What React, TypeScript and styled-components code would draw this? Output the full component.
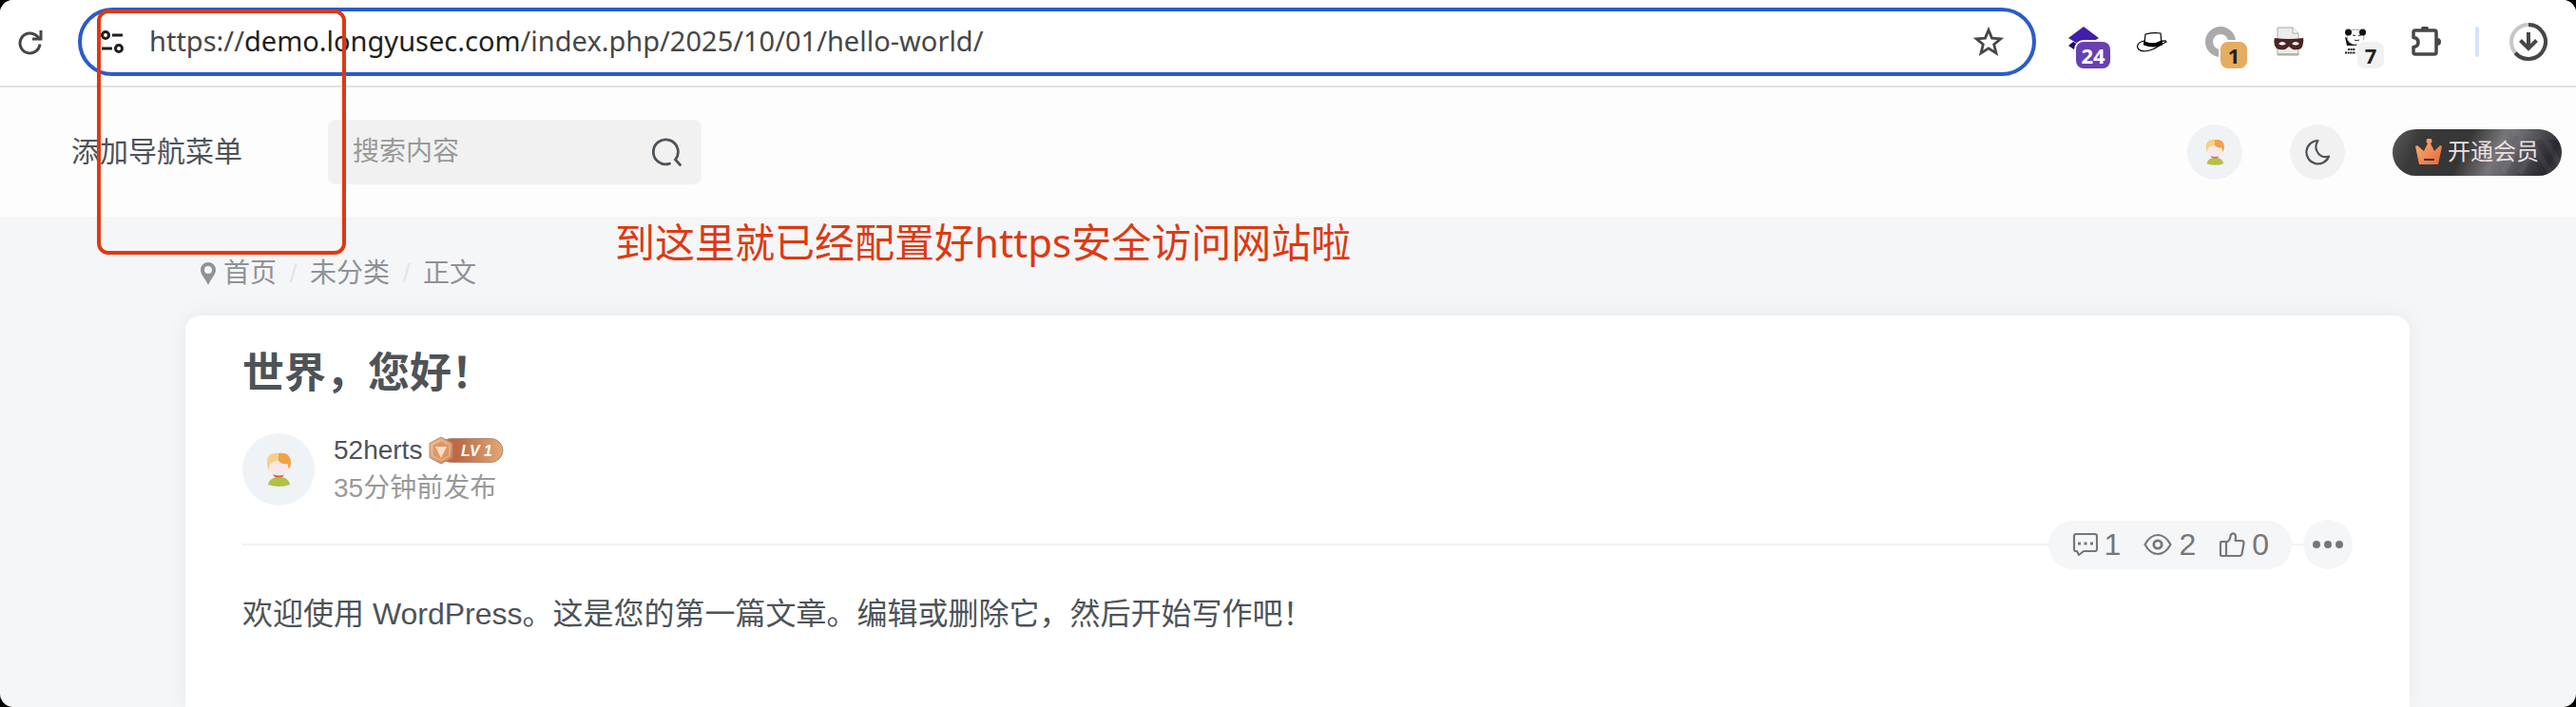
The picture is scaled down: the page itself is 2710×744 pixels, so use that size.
import React from 'react';
import styled, { createGlobalStyle } from 'styled-components';

const sans = '"Liberation Sans", "Noto Sans CJK SC", sans-serif';
const ui = '"Noto Sans", "Noto Sans CJK SC", sans-serif';

const GlobalStyle = createGlobalStyle`
  * { box-sizing: border-box; }
  html { background: #000; }
  body { margin: 0; font-family: ${sans}; color: #4e5358; }
  button { border: 0; padding: 0; background: none; font: inherit; color: inherit; cursor: pointer; }
  a { color: inherit; text-decoration: none; }
  svg { display: block; }
`;

const Window = styled.div`
  position: relative;
  display: flex;
  flex-direction: column;
  min-height: 100vh;
  background: #f5f6f8;
  border-radius: 14px;
  overflow: hidden;
`;

const Toolbar = styled.div`
  display: flex;
  align-items: center;
  height: 92px;
  padding: 0 30px 2px 16px;
  background: #fff;
  border-bottom: 2px solid #e1e1e1;
`;

const IconButton = styled.button`
  position: relative;
  flex: none;
  width: 32px;
  height: 32px;
`;

const AddressBar = styled.div`
  flex: 1;
  display: flex;
  align-items: center;
  gap: 21px;
  height: 72px;
  margin: 0 34px;
  padding: 0 30px 0 18px;
  border: 4px solid #2a5bce;
  border-radius: 36px;
`;

const Url = styled.div`
  flex: 1;
  padding-bottom: 2px;
  font-family: ${ui};
  font-size: 29px;
  line-height: 40px;
  color: #474747;
  white-space: nowrap;
  b { font-weight: 400; color: #1f1f1f; }
`;

const Extensions = styled.div`
  display: flex;
  align-items: center;
  gap: 40px;
`;

const Badge = styled.span<{ $bg: string; $color: string; $wide?: boolean }>`
  position: absolute;
  left: ${p => (p.$wide ? 8 : 16)}px;
  top: 16px;
  width: ${p => (p.$wide ? 36 : 28)}px;
  height: 28px;
  border-radius: 8px;
  box-shadow: 0 0 0 2px #fff;
  background: ${p => p.$bg};
  color: ${p => p.$color};
  font: 700 22px/28px ${ui};
  text-align: center;
`;

const Separator = styled.span`
  width: 4px;
  height: 32px;
  margin: 0 -8px 0 -4px;
  border-radius: 2px;
  background: #d6e2fb;
`;

const DownloadButton = styled(IconButton)`
  width: 40px;
  height: 40px;
`;

const SiteHeader = styled.header`
  display: flex;
  align-items: center;
  height: 136px;
  padding: 0 15px 0 75px;
  background: #fdfdfd;
`;

const NavLink = styled.a`
  font-size: 30px;
  line-height: 44px;
`;

const SearchForm = styled.form`
  display: flex;
  align-items: center;
  width: 393px;
  height: 68px;
  margin-left: 90px;
  padding: 0 20px 0 26px;
  border-radius: 8px;
  background: #f1f1f1;
`;

const SearchInput = styled.input`
  flex: 1;
  min-width: 0;
  border: 0;
  padding: 0;
  outline: none;
  background: none;
  font: 28px/40px ${sans};
  color: #4e5358;
  &::placeholder { color: #999; opacity: 1; }
`;

const HeaderActions = styled.div`
  display: flex;
  align-items: center;
  gap: 50px;
  margin-left: auto;
`;

const Round = styled.button<{ $size: number; $bg: string }>`
  display: flex;
  flex: none;
  align-items: center;
  justify-content: center;
  width: ${p => p.$size}px;
  height: ${p => p.$size}px;
  border-radius: 50%;
  background: ${p => p.$bg};
`;

const VipButton = styled.button`
  position: relative;
  display: flex;
  align-items: center;
  justify-content: center;
  gap: 6px;
  width: 178px;
  height: 49px;
  border-radius: 25px;
  overflow: hidden;
  background: linear-gradient(115deg, #5c5c5c 0%, #3a3a3a 16%, #353535 42%, #77767a 60%, #66656a 68%, #37363c 84%, #2a2930 90%, #4a494e 100%);
  color: #eadfdf;
  font-size: 24px;
  line-height: 36px;
  svg { flex: none; }
`;

const PatternLayer = styled.span`
  position: absolute;
  right: 0;
  top: 0;
`;

const Crumbs = styled.nav`
  display: flex;
  align-items: center;
  height: 40px;
  margin: 40px 0 24px 210px;
  font-size: 28px;
  line-height: 40px;
  color: #8f9297;
  svg { margin-right: 7px; }
`;

const Slash = styled.span`
  width: 35px;
  text-align: center;
  color: #e3e5e8;
`;

const Card = styled.article`
  flex: 1;
  margin: 0 175px 0 195px;
  padding: 28px 60px 40px;
  border-radius: 16px 16px 0 0;
  background: #fff;
  box-shadow: 0 0 20px rgba(116, 116, 116, 0.1);
`;

const Title = styled.h1`
  margin: 0 0 28px;
  font-size: 44px;
  line-height: 66px;
  font-weight: 700;
`;

const Author = styled.div`
  display: flex;
  align-items: center;
  gap: 20px;
`;

const NameLine = styled.div`
  display: flex;
  align-items: center;
  gap: 6px;
  font-size: 28px;
  line-height: 40px;
`;

const Posted = styled.div`
  font-size: 28px;
  line-height: 40px;
  color: #999;
`;

const MetaRow = styled.div`
  display: flex;
  align-items: center;
  height: 52px;
  margin-top: 13px;
`;

const Rule = styled.span<{ $grow?: boolean }>`
  flex: ${p => (p.$grow ? '1' : '0 0 12px')};
  height: 2px;
  background: #f2f3f4;
`;

const Stats = styled.div`
  display: flex;
  align-items: center;
  gap: 24px;
  height: 51px;
  padding: 0 24px;
  border-radius: 26px;
  background: #f5f6f8;
  color: #777;
`;

const Stat = styled.button`
  display: flex;
  align-items: center;
  gap: 7px;
  font-size: 32px;
  line-height: 40px;
`;

const Body = styled.p`
  margin: 22px 0 0;
  font-size: 32px;
  line-height: 50px;
`;

const Highlight = styled.div`
  position: absolute;
  left: 102px;
  top: 10px;
  width: 262px;
  height: 258px;
  border: 4px solid #dd3a12;
  border-radius: 12px;
  pointer-events: none;
`;

const Note = styled.div`
  position: absolute;
  left: 647px;
  top: 225px;
  font: 42px/60px ${ui};
  color: #dd3a12;
  white-space: nowrap;
  pointer-events: none;
`;

function Face({ size }: { size: number }) {
  return (
    <svg width={size} height={size} viewBox="0 0 76 76">
      <path d="M27 54c1-5 5-8 12-8s10 3 11 8q-11 4-23 0z" fill="#b3c045" />
      <path d="M32 43.500h12l-2 2.500q-4 1-8 0z" fill="#e8604c" />
      <path d="M28 30h20.500v8q-1 3-3 4.500-7 4-14 0-3-1.500-3.500-5z" fill="#f8e9e8" />
      <path d="M28 39c-2-3-2-6-2-9 0-7 5-10 12-9v8c-3 0-8 1-10 5z" fill="#f7cf86" />
      <path d="M38 21c8-1 13 2 13 10 0 3-1 5-2 7l-1.500-6q-6 1-9.500-3z" fill="#f1a34a" />
    </svg>
  );
}

function Reload() {
  return (
    <svg width="32" height="32" viewBox="0 0 32 32" fill="none" stroke="#474747" strokeWidth="3">
      <path d="M26 18.500a10.500 10.500 0 1 1-3-8.500l3.500 3.500" />
      <path d="M27 4v9H18" />
    </svg>
  );
}

function SiteSettings() {
  return (
    <svg width="28" height="28" viewBox="0 0 28 28" fill="none" stroke="#1f1f1f" strokeWidth="3">
      <circle cx="7" cy="7" r="3.500" />
      <path d="M14 7h11M3 21h11" />
      <circle cx="21" cy="21" r="3.500" />
    </svg>
  );
}

function Star() {
  return (
    <svg width="32" height="32" viewBox="0 0 32 32" fill="none" stroke="#474747" strokeWidth="2.800">
      <path d="M16 3.500l3.500 8.600 9.300.7-7.100 6 2.300 9.100-8-5-8 5 2.300-9.100-7.100-6 9.300-.7z" />
    </svg>
  );
}

function Layers() {
  return (
    <svg width="32" height="32" viewBox="0 0 32 32">
      <path d="M0 20l5-4 11 6 11-6 5 4-16 11z" fill="#1c0a66" />
      <path d="M16 0l16 12-16 10L0 12z" fill="#421ea8" />
    </svg>
  );
}

function Hat() {
  return (
    <svg width="32" height="32" viewBox="0 0 32 32" fill="none" stroke="#000" strokeWidth="1.200">
      <path d="M8 15C1 16-1 21 2 24c4 4 15 1 20-3 3-2 7-4 9-5-1-2-3-1-5 0" fill="#fff" />
      <path d="M8 18L9 8q8-2 16-1l1 11q-9 5-18 0z" fill="#fff" />
      <path d="M8 16q9 4 18-1l.500 4q-9 4-19 0z" fill="#000" />
    </svg>
  );
}

function Ring() {
  return (
    <svg width="32" height="32" viewBox="0 0 32 32">
      <circle cx="16" cy="16" r="12" fill="none" stroke="#aaa" strokeWidth="8" />
    </svg>
  );
}

function Mask() {
  return (
    <svg width="32" height="32" viewBox="0 0 32 32">
      <path d="M4 1h16l6 6v23H4z" fill="#ececec" stroke="#aaa" />
      <path d="M20 1v6h6" fill="#fff" stroke="#aaa" />
      <path d="M4 29h22" stroke="#9bb08c" strokeWidth="1.500" />
      <path d="M1 12q15 2 30 0 1 6-2 11-4 2-9 1l-4-3-4 3q-5 1-9-1-4-5-2-11z" fill="#4a2622" />
      <path d="M5 18q4-4 8 0-4 3-8 0zM19 18q4-4 8 0-4 3-8 0z" fill="#fff" />
    </svg>
  );
}

function Panda() {
  return (
    <svg width="32" height="32" viewBox="0 0 32 32">
      <path d="M3 11l2 9h11v-4z" fill="#111" />
      <ellipse cx="14" cy="11" rx="9" ry="8" fill="#fff" stroke="#888" strokeWidth="0.800" />
      <circle cx="6.500" cy="6" r="3.500" fill="#111" />
      <circle cx="21.500" cy="6" r="3.500" fill="#111" />
      <path d="M11 9l3 .500M17 9.500l3-.500M13 14q2 1.500 5 0" stroke="#222" fill="none" />
      <path d="M6 24h8M3 27.500h12" stroke="#222" strokeWidth="1.800" strokeDasharray="2 0.600" />
    </svg>
  );
}

function Puzzle() {
  return (
    <svg width="34" height="34" viewBox="0 0 34 34">
      <path d="M5 5h20q2 0 2 2v21q0 2-2 2H5q-2 0-2-2v-5.500q5-.500 5-5t-5-5V7q0-2 2-2z" transform="translate(0 -1)" fill="none" stroke="#474747" strokeWidth="3.500" strokeLinejoin="round" />
      <path d="M11 3a4 4 0 0 1 8 0zM28 12a4 4 0 0 1 0 8z" fill="#474747" />
    </svg>
  );
}

function Download() {
  return (
    <svg width="40" height="40" viewBox="0 0 40 40" fill="none" strokeWidth="4">
      <circle cx="20" cy="20" r="18" stroke="#c7c7c7" />
      <path d="M20 2a18 18 0 1 1-13.800 29.600" stroke="#474747" />
      <path d="M20 10v17M11.500 18.500l8.500 8.500 8.500-8.500" stroke="#474747" />
    </svg>
  );
}

function Magnifier() {
  return (
    <svg width="32" height="32" viewBox="0 0 32 32" fill="none" stroke="#4e5358" strokeWidth="2.800" strokeLinecap="round">
      <path d="M18.500 28.200A13 13 0 1 1 24.500 24l5 5.500" />
    </svg>
  );
}

function Moon() {
  return (
    <svg width="28" height="28" viewBox="0 0 28 28" fill="none" stroke="#4e5358" strokeWidth="2.200" strokeLinejoin="round">
      <path d="M14.500 2A12.200 12.200 0 1 0 26 18.500C17 21.500 8.500 12 14.500 2z" />
    </svg>
  );
}

function Crown() {
  return (
    <svg width="28" height="28" viewBox="0 0 28 28">
      <defs>
        <linearGradient id="crown" x1="0" y1="0" x2="1" y2="1">
          <stop offset="0.300" stopColor="#f39d68" />
          <stop offset="0.900" stopColor="#e8703c" />
        </linearGradient>
      </defs>
      <path d="M4 27L0 8l2-1 7 6 4-8a3 3 0 1 1 3 0l4 8 6-6 2 1-4 19z" fill="url(#crown)" />
      <path d="M9 22h11" stroke="#3a3635" strokeWidth="2" />
    </svg>
  );
}

function VipPattern() {
  return (
    <svg width="70" height="49" viewBox="0 0 70 49">
      <path d="M18 4h70M8 46L28 8h40M26 46l16-26 16 26M52 10l18 30" fill="none" stroke="#fff" strokeOpacity="0.050" strokeWidth="6" />
    </svg>
  );
}

function Pin() {
  return (
    <svg width="18" height="26" viewBox="0 0 18 26">
      <path d="M9 1a8 8 0 0 1 8 8c0 5-5 9-8 16C6 18 1 14 1 9a8 8 0 0 1 8-8zm0 4a4 4 0 1 0 0 8 4 4 0 0 0 0-8z" fill="#8f9297" fillRule="evenodd" />
    </svg>
  );
}

function LevelBadge() {
  return (
    <svg width="80" height="30" viewBox="0 0 80 30" role="img" aria-label="LV 1">
      <defs>
        <linearGradient id="lv" x1="0" x2="1">
          <stop offset="0.300" stopColor="#bd6a42" />
          <stop offset="1" stopColor="#e3a878" />
        </linearGradient>
        <linearGradient id="gem" x1="0" y1="0" x2="1" y2="1">
          <stop offset="0" stopColor="#f3c193" />
          <stop offset="1" stopColor="#cf8253" />
        </linearGradient>
      </defs>
      <rect x="12" y="2.500" width="67" height="25" rx="12.500" fill="url(#lv)" stroke="#b08a78" />
      <path d="M14 1l12 6.500v15L14 29 2 22.500v-15z" fill="url(#gem)" stroke="#b9836a" />
      <path d="M14 4.500l9 5v11l-9 5-9-5v-11z" fill="#dc9765" stroke="#f0bf98" />
      <path d="M8 11h12l-6 12z" fill="#fbe0c8" />
      <text x="35" y="21" fill="#fff" fontFamily="Liberation Sans, sans-serif" fontSize="16" fontWeight="700" fontStyle="italic">LV 1</text>
    </svg>
  );
}

function Comment() {
  return (
    <svg width="28" height="28" viewBox="0 0 28 28" fill="none" stroke="#777" strokeWidth="2.200" strokeLinejoin="round">
      <path d="M5 3h20q2 0 2 2v14q0 2-2 2H13l-5 4-2-4H5q-2 0-2-2V5q0-2 2-2z" />
      <path d="M7 13h3M13.500 13h3M20 13h3" strokeWidth="3" />
    </svg>
  );
}

function Eye() {
  return (
    <svg width="30" height="28" viewBox="0 0 30 28" fill="none" stroke="#777" strokeWidth="2.200">
      <path d="M1.500 14Q7 4 15 4t13.500 10Q23 24 15 24T1.500 14z" />
      <circle cx="15" cy="14" r="4.200" strokeWidth="2.800" />
    </svg>
  );
}

function Thumb() {
  return (
    <svg width="28" height="28" viewBox="0 0 28 28" fill="none" stroke="#777" strokeWidth="2.200" strokeLinejoin="round">
      <path d="M8 11H3q-1 0-1 1v13q0 1 1 1h5zM8 12q4-2 4.500-7 .500-3 3.500-2.500 3 1 1.500 7.500H24q3 0 2.500 3L24.500 24q-.500 2-3 2H8" />
    </svg>
  );
}

function Dots() {
  return (
    <svg width="32" height="8" viewBox="0 0 32 8" fill="#777">
      <circle cx="4" cy="4" r="4" />
      <circle cx="16" cy="4" r="4" />
      <circle cx="28" cy="4" r="4" />
    </svg>
  );
}

export default function App() {
  return (
    <Window>
      <GlobalStyle />
      <Toolbar>
        <IconButton aria-label="重新加载"><Reload /></IconButton>
        <AddressBar>
          <IconButton aria-label="网站信息"><SiteSettings /></IconButton>
          <Url>https://<b>demo.longyusec.com</b>/index.php/2025/10/01/hello-world/</Url>
          <IconButton aria-label="收藏"><Star /></IconButton>
        </AddressBar>
        <Extensions>
          <IconButton><Layers /><Badge $bg="#6740b4" $color="#fff" $wide>24</Badge></IconButton>
          <IconButton aria-label="帽子"><Hat /></IconButton>
          <IconButton><Ring /><Badge $bg="#e5ad5f" $color="#222">1</Badge></IconButton>
          <IconButton aria-label="面具"><Mask /></IconButton>
          <IconButton><Panda /><Badge $bg="#f1f1f1" $color="#222">7</Badge></IconButton>
          <IconButton aria-label="扩展程序"><Puzzle /></IconButton>
          <Separator />
          <DownloadButton aria-label="下载"><Download /></DownloadButton>
        </Extensions>
      </Toolbar>
      <SiteHeader>
        <NavLink href="#">添加导航菜单</NavLink>
        <SearchForm>
          <SearchInput placeholder="搜索内容" aria-label="搜索内容" />
          <IconButton type="button" aria-label="搜索"><Magnifier /></IconButton>
        </SearchForm>
        <HeaderActions>
          <Round $size={58} $bg="#eff3f6" aria-label="用户"><Face size={62} /></Round>
          <Round $size={58} $bg="#f1f1f1" aria-label="夜间模式"><Moon /></Round>
          <VipButton>
            <PatternLayer><VipPattern /></PatternLayer>
            <Crown />
            开通会员
          </VipButton>
        </HeaderActions>
      </SiteHeader>
      <Crumbs>
        <Pin />
        <a href="#">首页</a>
        <Slash>/</Slash>
        <a href="#">未分类</a>
        <Slash>/</Slash>
        <span>正文</span>
      </Crumbs>
      <Card>
        <Title>世界，您好！</Title>
        <Author>
          <Round $size={76} $bg="#eff3f6" aria-label="52herts"><Face size={76} /></Round>
          <div>
            <NameLine><a href="#">52herts</a><LevelBadge /></NameLine>
            <Posted>35分钟前发布</Posted>
          </div>
        </Author>
        <MetaRow>
          <Rule $grow />
          <Stats>
            <Stat><Comment />1</Stat>
            <Stat><Eye />2</Stat>
            <Stat><Thumb />0</Stat>
          </Stats>
          <Rule />
          <Round $size={52} $bg="#f5f6f8" aria-label="更多"><Dots /></Round>
        </MetaRow>
        <Body>欢迎使用 WordPress。这是您的第一篇文章。编辑或删除它，然后开始写作吧！</Body>
      </Card>
      <Highlight />
      <Note>到这里就已经配置好https安全访问网站啦</Note>
    </Window>
  );
}
